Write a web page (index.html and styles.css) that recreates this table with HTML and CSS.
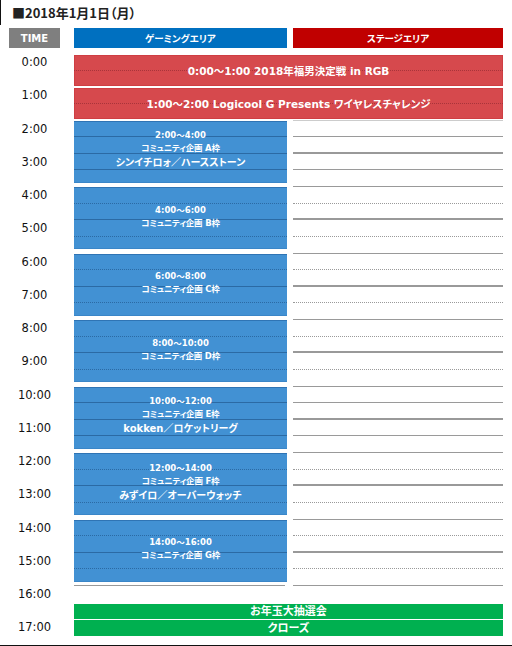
FILE: index.html
```html
<!DOCTYPE html>
<html lang="ja">
<head>
    <meta charset="UTF-8">
    <title>タイムテーブル 2018年1月1日</title>
    <link rel="stylesheet" href="styles.css">
</head>
<body>
    <div class="page">
        <h1 class="date">■2018年1月1日（月）</h1>

        <div class="timetable">
            <div class="head head-time">TIME</div>
            <div class="head head-game">ゲーミングエリア</div>
            <div class="head head-stage">ステージエリア</div>

            <div class="times">
                <div>0:00</div>
                <div>1:00</div>
                <div>2:00</div>
                <div>3:00</div>
                <div>4:00</div>
                <div>5:00</div>
                <div>6:00</div>
                <div>7:00</div>
                <div>8:00</div>
                <div>9:00</div>
                <div>10:00</div>
                <div>11:00</div>
                <div>12:00</div>
                <div>13:00</div>
                <div>14:00</div>
                <div>15:00</div>
                <div>16:00</div>
                <div>17:00</div>
            </div>

            <!-- 0:00 - 2:00 both areas -->
            <div class="top">
                <div class="event red">
                    <div class="lines"><div class="dot"></div><div></div></div>
                    <div class="label">0:00～1:00 2018年福男決定戦 in RGB</div>
                </div>
                <div class="event red">
                    <div class="lines"><div class="dot"></div><div></div></div>
                    <div class="label">1:00～2:00 Logicool G Presents ワイヤレスチャレンジ</div>
                </div>
            </div>

            <!-- gaming area -->
            <div class="game">
                <div class="event blue">
                    <div class="lines"><div class="solid"></div><div class="solid"></div><div class="solid"></div><div></div></div>
                    <div class="label">
                        <span class="when">2:00～4:00</span>
                        <span class="what">コミュニティ企画 A枠</span>
                        <span class="title">シンイチロォ／ハースストーン</span>
                    </div>
                </div>
                <div class="event blue">
                    <div class="lines"><div class="dot"></div><div class="solid"></div><div class="dot"></div><div></div></div>
                    <div class="label">
                        <span class="when">4:00～6:00</span>
                        <span class="what">コミュニティ企画 B枠</span>
                    </div>
                </div>
                <div class="event blue">
                    <div class="lines"><div class="dot"></div><div class="solid"></div><div class="dot"></div><div></div></div>
                    <div class="label">
                        <span class="when">6:00～8:00</span>
                        <span class="what">コミュニティ企画 C枠</span>
                    </div>
                </div>
                <div class="event blue">
                    <div class="lines"><div class="dot"></div><div class="solid"></div><div class="dot"></div><div></div></div>
                    <div class="label">
                        <span class="when">8:00～10:00</span>
                        <span class="what">コミュニティ企画 D枠</span>
                    </div>
                </div>
                <div class="event blue">
                    <div class="lines"><div class="solid"></div><div class="solid"></div><div class="solid"></div><div></div></div>
                    <div class="label">
                        <span class="when">10:00～12:00</span>
                        <span class="what">コミュニティ企画 E枠</span>
                        <span class="title">kokken／ロケットリーグ</span>
                    </div>
                </div>
                <div class="event blue">
                    <div class="lines"><div class="dot"></div><div class="solid"></div><div class="dot"></div><div></div></div>
                    <div class="label">
                        <span class="when">12:00～14:00</span>
                        <span class="what">コミュニティ企画 F枠</span>
                        <span class="title">みずイロ／オーバーウォッチ</span>
                    </div>
                </div>
                <div class="event blue">
                    <div class="lines"><div class="dot"></div><div class="solid"></div><div class="dot"></div><div></div></div>
                    <div class="label">
                        <span class="when">14:00～16:00</span>
                        <span class="what">コミュニティ企画 G枠</span>
                    </div>
                </div>
            </div>

            <!-- stage area (empty) -->
            <div class="stage">
                <div class="slot full"><div></div><div></div><div></div><div></div></div>
                <div class="slot"><div></div><div></div><div></div><div></div></div>
                <div class="slot"><div></div><div></div><div></div><div></div></div>
                <div class="slot"><div></div><div></div><div></div><div></div></div>
                <div class="slot full"><div></div><div></div><div></div><div></div></div>
                <div class="slot"><div></div><div></div><div></div><div></div></div>
                <div class="slot"><div></div><div></div><div></div><div></div></div>
            </div>

            <!-- 16:30 - both areas -->
            <div class="bottom">
                <div class="event green"><div class="label">お年玉大抽選会</div></div>
                <div class="event green"><div class="label">クローズ</div></div>
            </div>
        </div>
    </div>
</body>
</html>
```

FILE: styles.css
```css
body {
    margin: 0;
    font-family: "DejaVu Sans", "Noto Sans CJK JP", sans-serif;
    font-feature-settings: "palt";
    background-color: #fff;
    color: #222;
}
.page {
    width: 512px;
    height: 646px;
    box-sizing: border-box;
    border-bottom: 1px solid #111;
    overflow: hidden;
}
.date {
    margin: 0 0 3px;
    height: 25px;
    border-left: 1px solid #111;
    padding-left: 11px;
    font-family: "Noto Sans CJK JP", sans-serif;
    font-size: 13px;
    font-weight: bold;
    line-height: 26px;
}
.timetable {
    display: grid;
    grid-template-columns: 59px 213px 210px;
    grid-template-rows: 26px 66.53px 465.64px 49.9px;
    grid-template-areas:
        "thead ghead shead"
        "times top top"
        "times game stage"
        "times bottom bottom";
    column-gap: 6px;
    padding-left: 9px;
}
.head {
    height: 20px;
    display: flex;
    align-items: center;
    justify-content: center;
    color: #fff;
    font-weight: bold;
    font-size: 9.5px;
}
.head-time {
    grid-area: thead;
    width: 51px;
    font-size: 10px;
    background-color: #7f7f7f;
}
.head-game {
    grid-area: ghead;
    background-color: #0070c0;
}
.head-stage {
    grid-area: shead;
    background-color: #c00000;
}
.times {
    grid-area: times;
    width: 51px;
    display: grid;
    grid-auto-rows: 33.26px;
    font-size: 11.5px;
    line-height: 16px;
    text-align: center;
    color: #111;
}
.top {
    grid-area: top;
    display: flex;
    flex-direction: column;
}
.game {
    grid-area: game;
    display: flex;
    flex-direction: column;
    border-bottom: 1px solid #999;
    margin-right: 2px;
}
.stage {
    grid-area: stage;
    border-top: 1px solid #ccc;
    margin-top: -1px;
}
.bottom {
    grid-area: bottom;
    padding-top: 17.6px;
}

/* event boxes: lines layer and label layer share one cell */
.event {
    display: grid;
    color: #fff;
    font-weight: bold;
}
.event > * {
    grid-area: 1 / 1;
}
.label {
    display: flex;
    flex-direction: column;
    align-items: center;
    justify-content: center;
    text-align: center;
}
.lines div {
    box-sizing: border-box;
}
.lines .dot {
    border-bottom: 1px dotted;
}
.lines .solid {
    border-bottom: 1px solid;
}

.red {
    height: 31px;
    margin: 1px 0 1.26px;
    background-color: #d6494d;
    box-shadow: inset 0 0 0 1px #cf3e43;
    font-size: 10.5px;
}
.red .lines {
    display: grid;
    grid-template-rows: 1fr 1fr;
    color: #a8343a;
}

.blue {
    height: 62px;
    margin-right: -2px;
    margin-bottom: 4.53px;
    background-color: #4291d3;
    box-shadow: inset 0 1px #2f74b4, inset 0 -1px #3a86c8;
}
.blue .lines {
    display: grid;
    grid-auto-rows: 16.63px;
    color: #2b6aa4;
    overflow: hidden;
}
.blue .label {
    padding-bottom: 3px;
}
.when {
    font-size: 8.5px;
    line-height: 13px;
}
.what {
    font-size: 8.5px;
    letter-spacing: -0.2px;
    line-height: 13px;
}
.title {
    font-size: 10px;
    line-height: 16px;
}

.slot {
    display: grid;
    grid-template-rows: repeat(4, 16.63px);
}
.slot div {
    box-sizing: border-box;
    border-bottom: 1px dotted #9a9a9a;
}
.slot div:nth-child(2) {
    border-bottom: 2px solid #999;
}
.slot div:nth-child(4) {
    border-bottom: 1px solid #999;
}
.slot.full div {
    border-bottom-style: solid;
}

.green {
    height: 15.63px;
    margin-bottom: 1px;
    background-color: #00b050;
    font-size: 11px;
    line-height: 15px;
}
```
